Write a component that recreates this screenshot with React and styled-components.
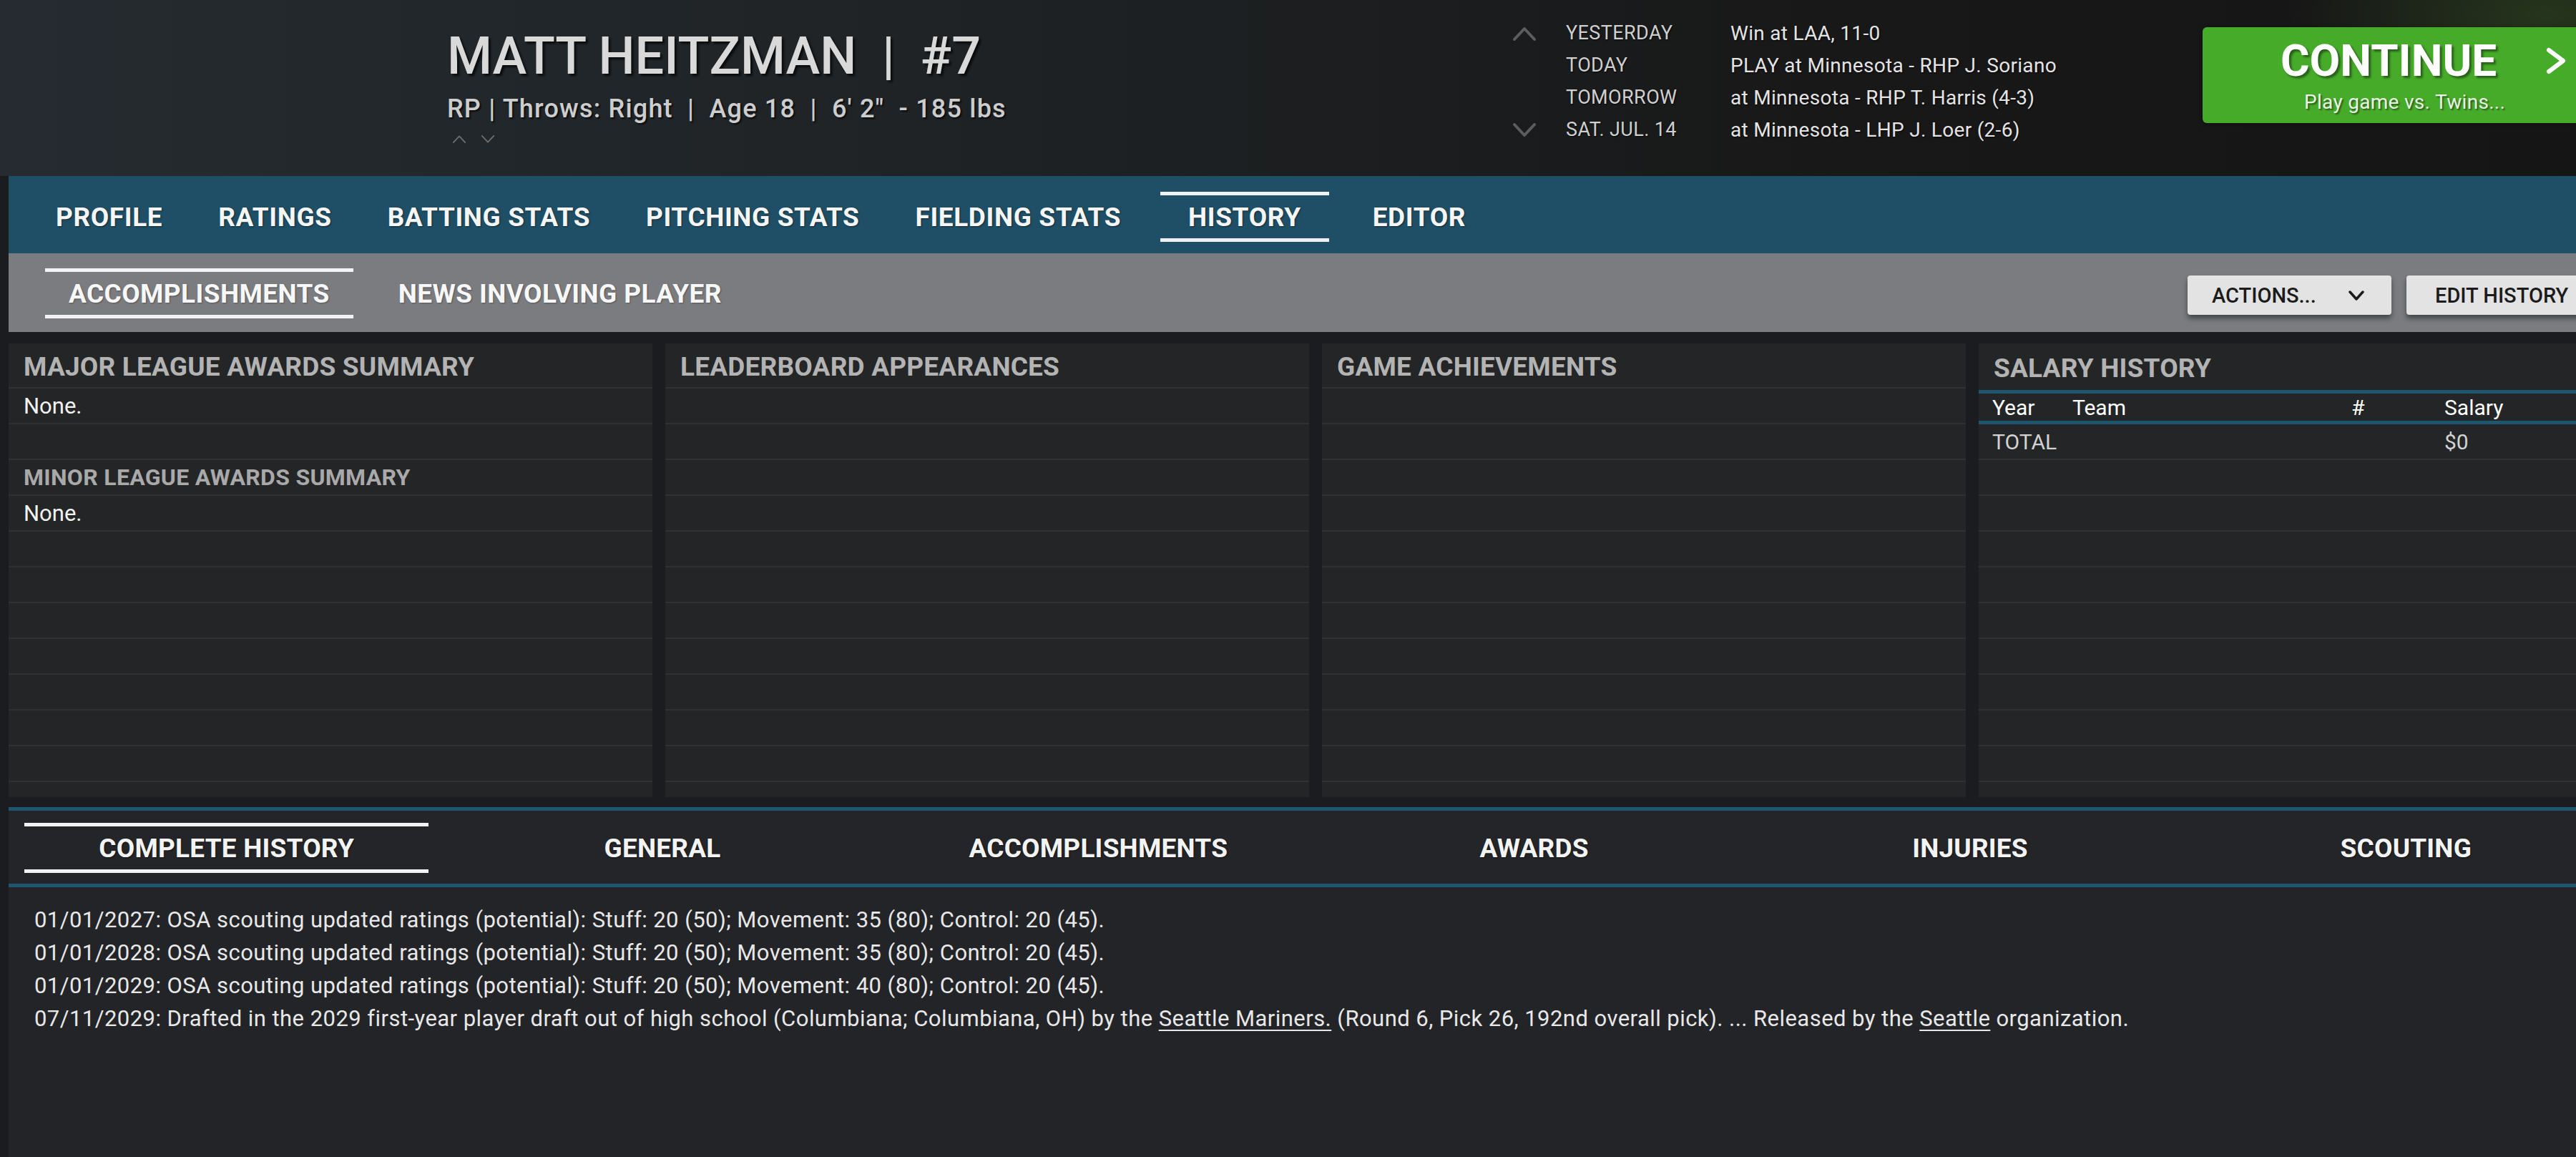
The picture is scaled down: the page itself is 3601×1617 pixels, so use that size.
import React from 'react';
import styled, { createGlobalStyle } from 'styled-components';

const GlobalStyle = createGlobalStyle`
  html, body { margin: 0; padding: 0; background: #1c1d20; overflow: hidden; }
  body { font-family: Roboto, "Liberation Sans", Arial, sans-serif; }
  * { box-sizing: border-box; }
`;

const Page = styled.div`
  width: 3668px;
  height: 1617px;
  display: flex;
  flex-direction: column;
  background: #1b1c1f;
`;

const Header = styled.header`
  height: 246px;
  flex: none;
  display: flex;
  align-items: flex-start;
  background:
    radial-gradient(ellipse 520px 230px at 3560px 20px, rgba(58, 92, 38, 0.45), rgba(0, 0, 0, 0) 70%),
    linear-gradient(90deg, #252b30 0%, #1f2326 35%, #181818 70%, #151515 100%);
`;

const NameBlock = styled.div`
  flex: none;
  margin-left: 625px;
  padding-top: 39px;
  width: 1489px;
  display: flex;
  flex-direction: column;
`;

const PlayerName = styled.div`
  font-size: 72px;
  font-weight: 500;
  line-height: 80px;
  color: #d9d9d9;
  white-space: pre;
  text-shadow: 3px 3px 3px rgba(0, 0, 0, 0.7);
`;

const PlayerMeta = styled.div`
  margin-top: 13px;
  font-size: 36px;
  font-weight: 500;
  letter-spacing: 1.2px;
  line-height: 40px;
  color: #cdcdcd;
  white-space: pre;
  text-shadow: 2px 2px 2px rgba(0, 0, 0, 0.7);
`;

const SmallArrows = styled.div`
  margin-top: 16px;
  margin-left: 7px;
  display: flex;
  gap: 20px;
`;

const Schedule = styled.div`
  flex: none;
  width: 965px;
  padding-top: 24px;
  display: grid;
  grid-template-columns: 75px 230px auto;
  grid-auto-rows: 45px;
  align-items: center;
`;

const ChevronCell = styled.div`
  display: flex;
  align-items: center;
  height: 45px;
`;

const DayLabel = styled.div`
  font-size: 27px;
  letter-spacing: 0.4px;
  color: #cfcfcf;
  line-height: 45px;
  text-shadow: 1px 1px 2px rgba(0, 0, 0, 0.8);
`;

const DayValue = styled.div`
  font-size: 28px;
  letter-spacing: 0.3px;
  color: #e4e4e4;
  line-height: 45px;
  white-space: nowrap;
  text-shadow: 1px 1px 2px rgba(0, 0, 0, 0.8);
`;

const ContinueButton = styled.div`
  flex: none;
  margin-top: 38px;
  width: 600px;
  height: 134px;
  background: #47ab2a;
  border-radius: 6px;
  display: flex;
  flex-direction: column;
  box-shadow: 0 2px 6px rgba(0, 0, 0, 0.4);
`;

const ContinueTitle = styled.div`
  padding-top: 15px;
  padding-left: 109px;
  display: flex;
  align-items: center;
  gap: 68px;
  font-size: 62px;
  font-weight: 700;
  line-height: 64px;
  color: #ffffff;
  text-shadow: 3px 3px 3px rgba(0, 0, 0, 0.45);
`;

const ContinueSub = styled.div`
  margin-top: 11px;
  padding-left: 142px;
  font-size: 28px;
  letter-spacing: 0.3px;
  line-height: 30px;
  color: #e9f3e4;
  text-shadow: 2px 2px 2px rgba(0, 0, 0, 0.45);
`;

const TabBar = styled.nav`
  margin-left: 12px;
  height: 108px;
  flex: none;
  display: flex;
  padding-left: 27px;
  background: #1e4f66;
`;

const Tab = styled.div`
  margin: 22px ${(p) => (p.$active ? 22 : 0)}px 0 ${(p) => (p.$active ? 16 : 0)}px;
  height: 70px;
  padding: 0 39px;
  display: flex;
  align-items: center;
  border-top: 5px solid ${(p) => (p.$active ? '#f1f1f1' : 'transparent')};
  border-bottom: 5px solid ${(p) => (p.$active ? '#f1f1f1' : 'transparent')};
  font-size: 37px;
  font-weight: 700;
  letter-spacing: 0.6px;
  color: #f5f5f5;
  white-space: nowrap;
  text-shadow: 1px 1px 2px rgba(0, 0, 0, 0.5);
`;

const SubBar = styled.div`
  margin-left: 12px;
  height: 110px;
  flex: none;
  display: flex;
  align-items: flex-start;
  padding-left: 51px;
  padding-right: 42px;
  gap: 30px;
  background: #7b7c7f;
`;

const SubTab = styled.div`
  margin-top: 21px;
  height: 70px;
  padding: 0 33px;
  display: flex;
  align-items: center;
  border-top: 5px solid ${(p) => (p.$active ? '#f3f3f3' : 'transparent')};
  border-bottom: 5px solid ${(p) => (p.$active ? '#f3f3f3' : 'transparent')};
  font-size: 37px;
  font-weight: 700;
  letter-spacing: 0.4px;
  color: #f7f7f7;
  white-space: nowrap;
  text-shadow: 1px 1px 2px rgba(0, 0, 0, 0.35);
`;

const ButtonGroup = styled.div`
  margin-left: auto;
  margin-top: 31px;
  display: flex;
  gap: 21px;
`;

const ActionButton = styled.div`
  width: ${(p) => p.$w}px;
  height: 55px;
  padding-left: ${(p) => p.$pl}px;
  display: flex;
  align-items: center;
  gap: 44px;
  background: #e3e3e3;
  border-radius: 4px;
  box-shadow: 0 5px 7px rgba(0, 0, 0, 0.45);
  font-size: 29px;
  font-weight: 500;
  color: #1b1b1b;
  white-space: nowrap;
`;

const Panels = styled.div`
  margin-top: 16px;
  margin-left: 12px;
  height: 634px;
  flex: none;
  display: grid;
  grid-template-columns: repeat(4, 900px);
  gap: 18px;
`;

const Panel = styled.section`
  background: #242527;
  overflow: hidden;
  display: flex;
  flex-direction: column;
`;

const PanelTitle = styled.div`
  height: ${(p) => (p.$plain ? 65 : 63)}px;
  flex: none;
  padding-left: 21px;
  padding-top: 4px;
  display: flex;
  align-items: center;
  border-bottom: ${(p) => (p.$plain ? 'none' : '2px solid #303134')};
  font-size: 37px;
  font-weight: 700;
  letter-spacing: 0.2px;
  color: #b3b3b3;
  white-space: nowrap;
`;

const Row = styled.div`
  height: 50px;
  flex: none;
  padding-left: 21px;
  display: flex;
  align-items: center;
  border-bottom: 2px solid #303134;
  font-size: ${(p) => (p.$sub ? 32 : 31)}px;
  font-weight: ${(p) => (p.$sub ? 700 : 400)};
  letter-spacing: ${(p) => (p.$sub ? 0.3 : 0)}px;
  color: ${(p) => (p.$sub ? '#a9a9a9' : '#f2f2f2')};
  white-space: nowrap;
`;

const SalaryGrid = styled.div`
  display: grid;
  grid-template-columns: 112px 390px 130px auto;
  align-items: center;
  padding-left: 19px;
  flex: none;
  height: ${(p) => (p.$head ? 48 : 50)}px;
  border-top: ${(p) => (p.$head ? '5px solid #1e5670' : 'none')};
  border-bottom: ${(p) => (p.$head ? '5px solid #1e5670' : '2px solid #303134')};
  font-size: 30px;
  color: ${(p) => (p.$head ? '#ffffff' : '#d2d2d2')};
`;

const Bottom = styled.section`
  margin-top: 14px;
  margin-left: 12px;
  flex: 1;
  background: #232427;
  display: flex;
  flex-direction: column;
`;

const HistoryTabs = styled.div`
  height: 112px;
  flex: none;
  display: grid;
  grid-template-columns: repeat(6, 1fr);
  border-top: 5px solid #1e5670;
  border-bottom: 5px solid #1e5670;
  background: #242528;
`;

const HistoryTabCell = styled.div`
  padding: 17px 22px 0;
`;

const HistoryTab = styled.div`
  height: 70px;
  display: flex;
  align-items: center;
  justify-content: center;
  border-top: 5px solid ${(p) => (p.$active ? '#f3f3f3' : 'transparent')};
  border-bottom: 5px solid ${(p) => (p.$active ? '#f3f3f3' : 'transparent')};
  font-size: 37px;
  font-weight: 700;
  letter-spacing: 0.2px;
  color: #f3f3f3;
  white-space: nowrap;
  text-shadow: 1px 1px 2px rgba(0, 0, 0, 0.5);
`;

const HistoryText = styled.div`
  padding: 23px 0 0 36px;
  font-size: 31px;
  letter-spacing: 0.45px;
  line-height: 46px;
  color: #e8e8e8;
  white-space: nowrap;
`;

const Link = styled.span`
  text-decoration: underline;
  text-underline-offset: 5px;
  text-decoration-thickness: 2px;
`;

const Chevron = ({ up, color = '#5d5d5d', w = 34, h = 22, sw = 4 }) => (
  <svg width={w} height={h} viewBox="0 0 34 22" preserveAspectRatio="none">
    <polyline
      points={up ? '3,19 17,4 31,19' : '3,3 17,18 31,3'}
      fill="none"
      stroke={color}
      strokeWidth={sw}
      strokeLinecap="round"
      strokeLinejoin="round"
    />
  </svg>
);

const schedule = [
  { up: true, label: 'YESTERDAY', value: 'Win at LAA, 11-0' },
  { label: 'TODAY', value: 'PLAY at Minnesota - RHP J. Soriano' },
  { label: 'TOMORROW', value: 'at Minnesota - RHP T. Harris (4-3)' },
  { down: true, label: 'SAT. JUL. 14', value: 'at Minnesota - LHP J. Loer (2-6)' },
];

const mainTabs = ['PROFILE', 'RATINGS', 'BATTING STATS', 'PITCHING STATS', 'FIELDING STATS', 'HISTORY', 'EDITOR'];
const historyTabs = ['COMPLETE HISTORY', 'GENERAL', 'ACCOMPLISHMENTS', 'AWARDS', 'INJURIES', 'SCOUTING'];

const emptyRows = (n) => Array.from({ length: n }, (_, i) => <Row key={i} />);

export default function App() {
  return (
    <>
      <GlobalStyle />
      <Page>
        <Header>
          <NameBlock>
            <PlayerName>{'MATT HEITZMAN  |  #7'}</PlayerName>
            <PlayerMeta>{'RP | Throws: Right  |  Age 18  |  6\' 2"  - 185 lbs'}</PlayerMeta>
            <SmallArrows>
              <Chevron up color="#6f6f6f" w={20} h={13} sw={3} />
              <Chevron color="#6f6f6f" w={20} h={13} sw={3} />
            </SmallArrows>
          </NameBlock>
          <Schedule>
            {schedule.map((s) => (
              <React.Fragment key={s.label}>
                <ChevronCell>{s.up ? <Chevron up /> : s.down ? <Chevron /> : null}</ChevronCell>
                <DayLabel>{s.label}</DayLabel>
                <DayValue>{s.value}</DayValue>
              </React.Fragment>
            ))}
          </Schedule>
          <ContinueButton>
            <ContinueTitle>
              <span>CONTINUE</span>
              <svg width="30" height="38" viewBox="0 0 30 38">
                <polyline points="5,4 25,19 5,34" fill="none" stroke="#ffffff" strokeWidth="6" strokeLinecap="round" strokeLinejoin="round" />
              </svg>
            </ContinueTitle>
            <ContinueSub>Play game vs. Twins...</ContinueSub>
          </ContinueButton>
        </Header>

        <TabBar>
          {mainTabs.map((t) => (
            <Tab key={t} $active={t === 'HISTORY'}>{t}</Tab>
          ))}
        </TabBar>

        <SubBar>
          <SubTab $active>ACCOMPLISHMENTS</SubTab>
          <SubTab>NEWS INVOLVING PLAYER</SubTab>
          <ButtonGroup>
            <ActionButton $w={285} $pl={34}>
              <span>ACTIONS...</span>
              <svg width="24" height="16" viewBox="0 0 24 16">
                <polyline points="3,3 12,13 21,3" fill="none" stroke="#1b1b1b" strokeWidth="3.5" strokeLinecap="round" strokeLinejoin="round" />
              </svg>
            </ActionButton>
            <ActionButton $w={262} $pl={40}>EDIT HISTORY</ActionButton>
          </ButtonGroup>
        </SubBar>

        <Panels>
          <Panel>
            <PanelTitle>MAJOR LEAGUE AWARDS SUMMARY</PanelTitle>
            <Row>None.</Row>
            <Row />
            <Row $sub>MINOR LEAGUE AWARDS SUMMARY</Row>
            <Row>None.</Row>
            {emptyRows(8)}
          </Panel>
          <Panel>
            <PanelTitle>LEADERBOARD APPEARANCES</PanelTitle>
            {emptyRows(12)}
          </Panel>
          <Panel>
            <PanelTitle>GAME ACHIEVEMENTS</PanelTitle>
            {emptyRows(12)}
          </Panel>
          <Panel>
            <PanelTitle $plain>SALARY HISTORY</PanelTitle>
            <SalaryGrid $head>
              <span>Year</span>
              <span>Team</span>
              <span>#</span>
              <span>Salary</span>
            </SalaryGrid>
            <SalaryGrid>
              <span>TOTAL</span>
              <span />
              <span />
              <span>$0</span>
            </SalaryGrid>
            {emptyRows(11)}
          </Panel>
        </Panels>

        <Bottom>
          <HistoryTabs>
            {historyTabs.map((t) => (
              <HistoryTabCell key={t}>
                <HistoryTab $active={t === 'COMPLETE HISTORY'}>{t}</HistoryTab>
              </HistoryTabCell>
            ))}
          </HistoryTabs>
          <HistoryText>
            <div>01/01/2027: OSA scouting updated ratings (potential): Stuff: 20 (50); Movement: 35 (80); Control: 20 (45).</div>
            <div>01/01/2028: OSA scouting updated ratings (potential): Stuff: 20 (50); Movement: 35 (80); Control: 20 (45).</div>
            <div>01/01/2029: OSA scouting updated ratings (potential): Stuff: 20 (50); Movement: 40 (80); Control: 20 (45).</div>
            <div>
              07/11/2029: Drafted in the 2029 first-year player draft out of high school (Columbiana; Columbiana, OH) by the{' '}
              <Link>Seattle Mariners.</Link> (Round 6, Pick 26, 192nd overall pick). ... Released by the <Link>Seattle</Link> organization.
            </div>
          </HistoryText>
        </Bottom>
      </Page>
    </>
  );
}
